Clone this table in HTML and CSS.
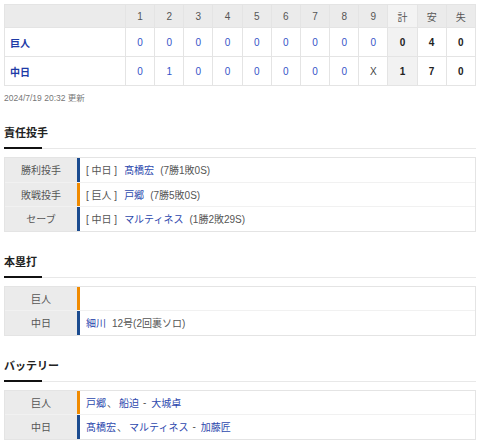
FILE: index.html
```html
<!DOCTYPE html>
<html lang="ja">
<head>
<meta charset="utf-8">
<link rel="stylesheet" href="styles.css">
</head>
<body>
<table class="score">
  <colgroup>
    <col class="c-team">
    <col span="12">
  </colgroup>
  <thead>
    <tr>
      <th></th>
      <th>1</th><th>2</th><th>3</th><th>4</th><th>5</th><th>6</th><th>7</th><th>8</th><th>9</th>
      <th class="tot">計</th><th>安</th><th>失</th>
    </tr>
  </thead>
  <tbody>
    <tr>
      <td class="team">巨人</td>
      <td class="inn">0</td><td class="inn">0</td><td class="inn">0</td><td class="inn">0</td><td class="inn">0</td><td class="inn">0</td><td class="inn">0</td><td class="inn">0</td><td class="inn">0</td>
      <td class="tot b">0</td><td class="b">4</td><td class="b">0</td>
    </tr>
    <tr>
      <td class="team">中日</td>
      <td class="inn">0</td><td class="inn">1</td><td class="inn">0</td><td class="inn">0</td><td class="inn">0</td><td class="inn">0</td><td class="inn">0</td><td class="inn">0</td><td class="x">X</td>
      <td class="tot b">1</td><td class="b">7</td><td class="b">0</td>
    </tr>
  </tbody>
</table>
<p class="stamp">2024/7/19 20:32 更新</p>

<section class="sec">
  <h2 class="sec-title">責任投手</h2>
  <div class="list">
    <div class="row">
      <div class="lbl">勝利投手</div>
      <div class="val dra"><span class="tm">[ 中日 ]</span><span class="lk">髙橋宏</span><span class="rec">(7勝1敗0S)</span></div>
    </div>
    <div class="row">
      <div class="lbl">敗戦投手</div>
      <div class="val gia"><span class="tm">[ 巨人 ]</span><span class="lk">戸郷</span><span class="rec">(7勝5敗0S)</span></div>
    </div>
    <div class="row">
      <div class="lbl">セーブ</div>
      <div class="val dra"><span class="tm">[ 中日 ]</span><span class="lk">マルティネス</span><span class="rec">(1勝2敗29S)</span></div>
    </div>
  </div>
</section>

<section class="sec">
  <h2 class="sec-title">本塁打</h2>
  <div class="list">
    <div class="row">
      <div class="lbl">巨人</div>
      <div class="val gia"></div>
    </div>
    <div class="row">
      <div class="lbl">中日</div>
      <div class="val dra"><span class="lk">細川</span><span class="rec">12号(2回裏ソロ)</span></div>
    </div>
  </div>
</section>

<section class="sec">
  <h2 class="sec-title">バッテリー</h2>
  <div class="list">
    <div class="row">
      <div class="lbl">巨人</div>
      <div class="val gia"><span class="lk">戸郷</span><span class="comma">、</span><span class="lk">船迫</span><span class="dash">-</span><span class="lk">大城卓</span></div>
    </div>
    <div class="row">
      <div class="lbl">中日</div>
      <div class="val dra"><span class="lk">髙橋宏</span><span class="comma">、</span><span class="lk">マルティネス</span><span class="dash">-</span><span class="lk">加藤匠</span></div>
    </div>
  </div>
</section>
</body>
</html>
```
FILE: styles.css
```css
html, body {
  margin: 0;
  background: #fff;
}
body {
  padding: 4px 4px 0 4px;
  font-family: "Liberation Sans", "Noto Sans CJK JP", sans-serif;
  font-size: 10px;
  color: #333;
}

/* score table */
.score {
  width: 472px;
  border-collapse: collapse;
  table-layout: fixed;
  border: 1px solid #e4e4e4;
}
.score .c-team { width: 121px; }
.score th, .score td {
  border: 1px solid #e4e4e4;
  text-align: center;
  padding: 0;
}
.score th {
  height: 22px;
  background: #ebebeb;
  font-weight: normal;
  color: #555;
  font-size: 10px;
}
.score th.tot { background: #f3f3f3; }
.score td {
  height: 28px;
  font-size: 10px;
}
.score td.team {
  text-align: left;
  padding-left: 5px;
  font-weight: bold;
  color: #1d3aa6;
}
.score td.inn { color: #3554c8; }
.score td.x { color: #444; }
.score td.b { font-weight: bold; color: #222; }
.score td.tot { background: #f2f2f2; }

.stamp {
  margin: 5px 0 0 0;
  font-size: 8.5px;
  line-height: 14px;
  color: #777;
}

/* sections */
.sec { margin-top: 20px; }
.sec + .sec { margin-top: 22px; }
.sec-title {
  position: relative;
  margin: 0;
  font-size: 11px;
  font-weight: bold;
  line-height: 16px;
  padding-bottom: 7px;
  color: #222;
  border-bottom: 1px solid #e8e8e8;
}
.sec-title::after {
  content: "";
  position: absolute;
  left: 0;
  bottom: -1px;
  width: 38px;
  height: 2px;
  background: #111;
}

.list {
  margin-top: 8px;
  border: 1px solid #e4e4e4;
}
.row {
  display: flex;
  height: 23.5px;
}
.row + .row { border-top: 1px solid #f1f1f1; }
.lbl {
  width: 72px;
  flex: none;
  background: #ebebeb;
  color: #555;
  display: flex;
  align-items: center;
  justify-content: center;
}
.val {
  flex: 1;
  display: flex;
  align-items: center;
  padding-left: 6px;
  border-left: 3px solid #1b4b8f;
  color: #444;
  white-space: nowrap;
}
.val.gia { border-left-color: #f08a00; }
.val.dra { border-left-color: #1b4b8f; }
.tm { margin-right: 7px; color: #555; }
.lk { color: #2d48ad; }
.rec { margin-left: 6px; color: #555; }
.comma { color: #555; margin: 0 2px 0 1px; }
.dash { color: #555; margin: 0 5px 0 4px; }
```
